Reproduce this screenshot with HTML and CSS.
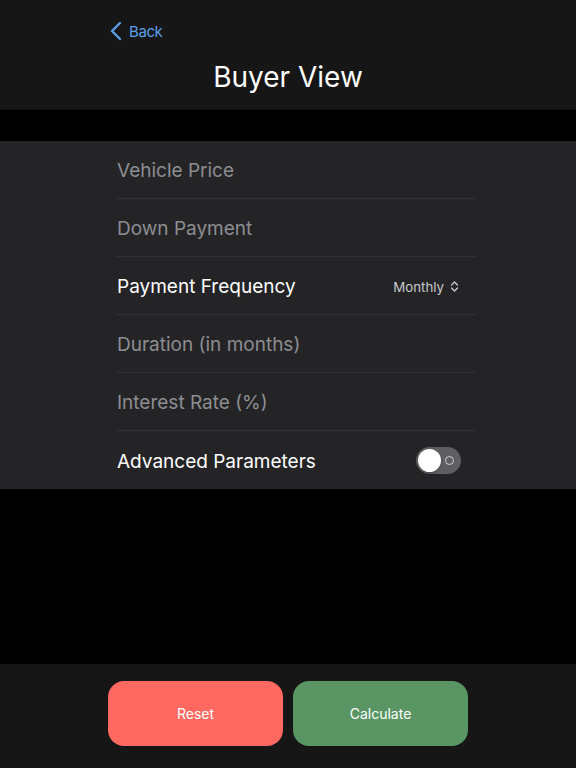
FILE: index.html
```html
<!DOCTYPE html>
<html lang="en">
<head>
<meta charset="utf-8">
<title>Buyer View</title>
<link rel="stylesheet" href="styles.css">
</head>
<body>
<div class="screen">
  <header class="nav">
    <a class="back" href="#">
      <svg class="back-chevron" width="12" height="20" viewBox="0 0 12 20"><path d="M10 2 L2 10 L10 18" fill="none" stroke="currentColor" stroke-width="2.4" stroke-linecap="round" stroke-linejoin="round"/></svg>
      <span>Back</span>
    </a>
    <h1 class="title">Buyer View</h1>
  </header>

  <div class="spacer"></div>

  <section class="form">
    <div class="row"><span class="placeholder">Vehicle Price</span></div>
    <div class="row"><span class="placeholder">Down Payment</span></div>
    <div class="row">
      <span class="label">Payment Frequency</span>
      <span class="picker">Monthly
        <svg width="9" height="13" viewBox="0 0 9 13"><path d="M1.5 5 L4.5 2 L7.5 5 M1.5 8 L4.5 11 L7.5 8" fill="none" stroke="currentColor" stroke-width="1.4" stroke-linecap="round" stroke-linejoin="round"/></svg>
      </span>
    </div>
    <div class="row"><span class="placeholder">Duration (in months)</span></div>
    <div class="row"><span class="placeholder">Interest Rate (%)</span></div>
    <div class="row last">
      <span class="label">Advanced Parameters</span>
      <span class="toggle"><span class="thumb"></span><span class="off-mark"></span></span>
    </div>
  </section>

  <div class="fill"></div>

  <footer class="toolbar">
    <button class="btn reset">Reset</button>
    <button class="btn calc">Calculate</button>
  </footer>
</div>
</body>
</html>
```

FILE: styles.css
```css
* { box-sizing: border-box; }
html, body { margin: 0; height: 100%; background: #000; }
body { font-family: Inter, "Liberation Sans", sans-serif; color: #fff; }

.screen { display: flex; flex-direction: column; height: 768px; }

.nav {
  height: 110px;
  background: #161616;
  border-bottom: 1px solid #101010;
  position: relative;
  display: flex;
  flex-direction: column;
  align-items: center;
}
.back {
  position: absolute;
  left: 110px;
  top: 21px;
  display: flex;
  align-items: center;
  gap: 7px;
  color: #5b9fe6;
  text-decoration: none;
  font-size: 15px;
  letter-spacing: -0.4px;
}
.title {
  margin: 60px 0 0;
  font-size: 28px;
  font-weight: 400;
  line-height: 34px;
}

.spacer { height: 31px; }

.form {
  background: #242426;
  padding: 0 100px 0 116px;
}
.row {
  height: 58px;
  display: flex;
  align-items: center;
  justify-content: space-between;
  border-bottom: 1px solid #323235;
  font-size: 19px;
  padding: 2px 15px 0 1px;
}
.row.last { border-bottom: none; }
.placeholder { color: #8d8d92; }
.label { color: #fff; }
.picker {
  display: flex;
  align-items: center;
  gap: 6px;
  font-size: 13.3px;
  color: #c9c9cd;
  margin-right: 2px;
}
.toggle {
  width: 45px;
  height: 27px;
  border-radius: 14px;
  background: #5e5e63;
  position: relative;
  display: block;
  margin-top: -2px;
}
.thumb {
  position: absolute;
  left: 2px;
  top: 2px;
  width: 23px;
  height: 23px;
  border-radius: 50%;
  background: #fff;
  box-shadow: 0 1px 3px rgba(0,0,0,0.3);
}
.off-mark {
  position: absolute;
  right: 7px;
  top: 9px;
  width: 9px;
  height: 9px;
  border-radius: 50%;
  border: 1.5px solid #d0d0d4;
}

.fill { flex: 1; }

.toolbar {
  height: 104px;
  background: #161616;
  display: flex;
  justify-content: center;
  gap: 10px;
  padding-top: 17px;
}
.btn {
  width: 175px;
  height: 65px;
  border: none;
  border-radius: 16px;
  font-family: inherit;
  font-size: 14px;
  color: #fff;
}
.reset { background: #ff6961; }
.calc { background: #599664; }
```
